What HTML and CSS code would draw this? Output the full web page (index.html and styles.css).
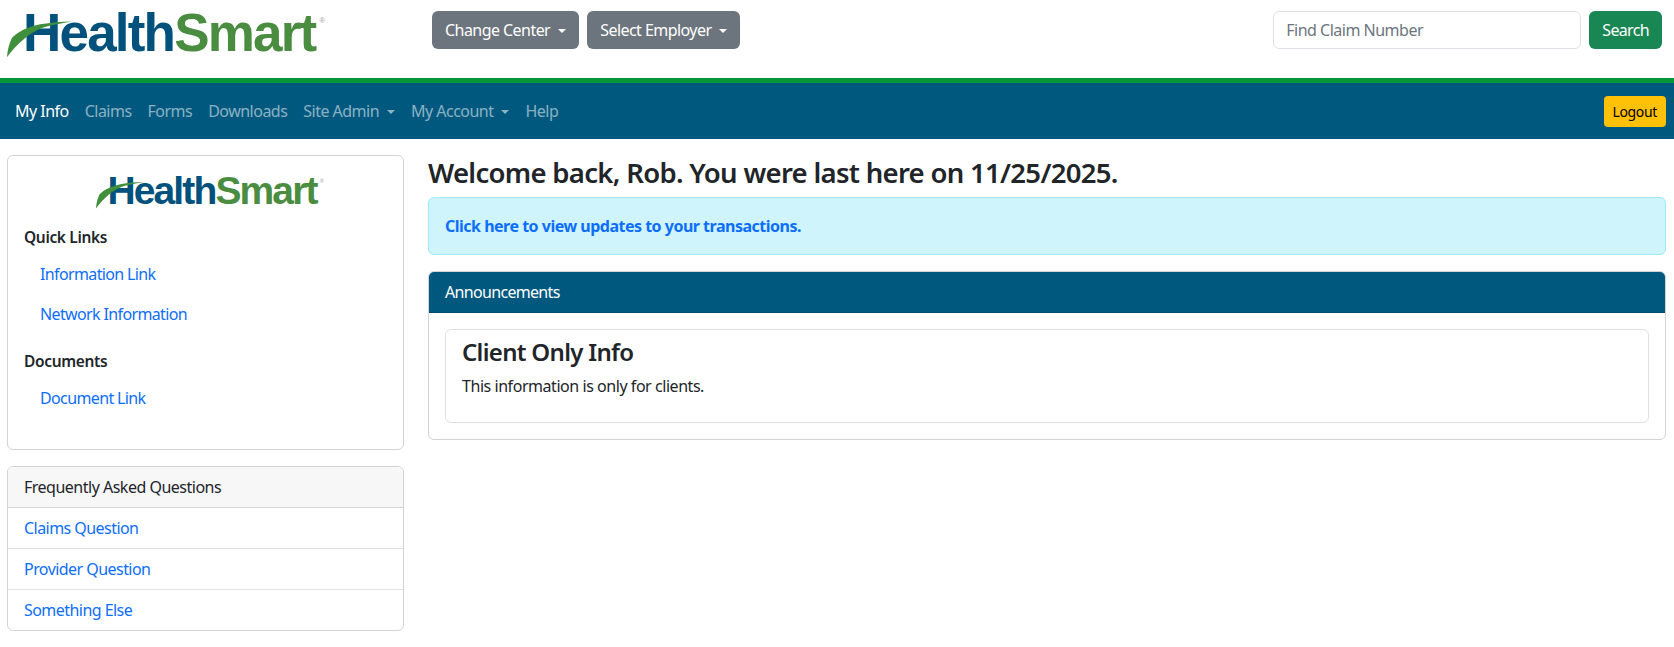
FILE: index.html
```html
<!DOCTYPE html>
<html lang="en">
<head>
    <meta charset="UTF-8">
    <title>HealthSmart</title>
    <link rel="stylesheet" href="styles.css">
</head>
<body>
<header class="top-header">
    <div class="top-logo">
        <div class="logo">
            <svg class="logo-swoosh" viewBox="0 0 70 40" preserveAspectRatio="none"><path d="M0 39 C0.5 31 2.5 24 5 19 C11 12 22 7 34 4.5 C45 2.5 56 1.8 67 1.5 C56 3.5 46 5 38 7.5 C24 12 10 25 0 39 Z"/></svg>
            <span class="logo-blue">Health</span><span class="logo-green">Smart</span><span class="logo-reg">®</span>
        </div>
    </div>
    <div class="top-buttons">
        <button class="btn btn-grey">Change Center<i class="caret"></i></button>
        <button class="btn btn-grey">Select Employer<i class="caret"></i></button>
    </div>
    <form class="top-search">
        <input type="text" class="search-input" placeholder="Find Claim Number">
        <button class="btn btn-green" type="button">Search</button>
    </form>
</header>

<nav class="main-nav">
    <a class="nav-link active" href="#">My Info</a>
    <a class="nav-link" href="#">Claims</a>
    <a class="nav-link" href="#">Forms</a>
    <a class="nav-link" href="#">Downloads</a>
    <a class="nav-link" href="#">Site Admin<i class="caret"></i></a>
    <a class="nav-link" href="#">My Account<i class="caret"></i></a>
    <a class="nav-link" href="#">Help</a>
    <button class="btn btn-logout">Logout</button>
</nav>

<div class="page">
    <aside class="side">
        <div class="card links-card">
            <div class="side-logo">
                <div class="logo logo-small">
                    <svg class="logo-swoosh" viewBox="0 0 70 40" preserveAspectRatio="none"><path d="M0 39 C0.5 31 2.5 24 5 19 C11 12 22 7 34 4.5 C45 2.5 56 1.8 67 1.5 C56 3.5 46 5 38 7.5 C24 12 10 25 0 39 Z"/></svg>
                    <span class="logo-blue">Health</span><span class="logo-green">Smart</span><span class="logo-reg">®</span>
                </div>
            </div>
            <div class="links-title">Quick Links</div>
            <a class="side-link" href="#">Information Link</a>
            <a class="side-link" href="#">Network Information</a>
            <div class="links-title links-title-next">Documents</div>
            <a class="side-link" href="#">Document Link</a>
        </div>

        <div class="card faq-card">
            <div class="faq-header">Frequently Asked Questions</div>
            <a class="faq-item" href="#">Claims Question</a>
            <a class="faq-item" href="#">Provider Question</a>
            <a class="faq-item" href="#">Something Else</a>
        </div>
    </aside>

    <main class="content">
        <h3 class="welcome">Welcome back, Rob. You were last here on 11/25/2025.</h3>
        <div class="alert"><a href="#">Click here to view updates to your transactions.</a></div>

        <div class="card">
            <div class="announce-header">Announcements</div>
            <div class="announce-body">
                <div class="info-card">
                    <h4>Client Only Info</h4>
                    <p>This information is only for clients.</p>
                </div>
            </div>
        </div>
    </main>
</div>
</body>
</html>
```

FILE: styles.css
```css
* {
    box-sizing: border-box;
}
body {
    margin: 0;
    font-family: "Noto Sans", "Open Sans", sans-serif;
    font-size: 16px;
    line-height: 24px;
    color: #212529;
    background-color: #fff;
}
a {
    color: #0d6efd;
    text-decoration: none;
}

/* buttons */
.btn {
    height: 38px;
    padding: 0 12px;
    border: 1px solid transparent;
    border-radius: 6px;
    font-family: inherit;
    font-size: 16px;
    letter-spacing: -0.55px;
    color: #fff;
}
.btn-grey {
    background-color: #6c757d;
}
.btn-green {
    letter-spacing: -0.65px;
    background-color: #198754;
}
.btn-logout {
    height: 31px;
    margin-left: auto;
    padding: 0 8px;
    border-radius: 4px;
    font-size: 14px;
    letter-spacing: -0.35px;
    color: #000;
    background-color: #ffc107;
}
.caret {
    display: inline-block;
    margin-left: 8px;
    vertical-align: 3px;
    border-top: 4.8px solid;
    border-left: 4.8px solid transparent;
    border-right: 4.8px solid transparent;
}

/* logo */
.logo {
    position: relative;
    display: inline-block;
    font-family: "Liberation Sans", Arial, sans-serif;
    font-size: 53px;
    font-weight: 700;
    line-height: 1;
    letter-spacing: -0.034em;
    white-space: nowrap;
}
.logo-small {
    font-size: 39px;
    letter-spacing: -0.048em;
}
.logo-blue {
    color: #00517c;
}
.logo-green {
    color: #4a8c40;
}
.logo-reg {
    position: absolute;
    top: 1.5em;
    right: -1.3em;
    font-size: 0.14em;
    font-weight: 400;
    letter-spacing: 0;
    color: #999;
}
.logo-swoosh {
    position: absolute;
    top: 0.26em;
    left: -0.3em;
    width: 1.29em;
    height: 0.72em;
    overflow: visible;
    fill: #3f8f3c;
}

/* header */
.top-header {
    display: flex;
    align-items: flex-start;
    height: 78px;
    padding: 6px 12px 0 0;
}
.top-logo {
    display: flex;
    width: 432px;
    padding-left: 23px;
}
.top-buttons {
    display: flex;
    gap: 8px;
    margin-top: 5px;
}
.top-search {
    display: flex;
    gap: 8px;
    margin: 5px 0 0 auto;
}
.search-input {
    width: 308px;
    height: 38px;
    padding: 0 12px;
    border: 1px solid #dee2e6;
    border-radius: 6px;
    font-family: inherit;
    font-size: 16px;
    letter-spacing: -0.5px;
}
.search-input::placeholder {
    color: #6c757d;
}

/* nav */
.main-nav {
    display: flex;
    align-items: center;
    height: 61px;
    padding: 0 8px 0 7px;
    border-top: 5px solid #05963a;
    background-color: #00587f;
}
.nav-link {
    padding: 8px;
    letter-spacing: -0.52px;
    color: rgba(255, 255, 255, .55);
}
.nav-link.active {
    color: #fff;
}

/* page */
.page {
    display: grid;
    grid-template-columns: 397px 1fr;
    gap: 24px;
    padding: 16px 8px 0 7px;
}
.card {
    border: 1px solid #d3d3d3;
    border-radius: 6px;
    background-color: #fff;
}
.links-card {
    height: 295px;
    padding: 0 16px;
}
.side-logo {
    display: flex;
    justify-content: center;
    padding: 15px 0 15px 13px;
}
.links-title {
    font-weight: 600;
    font-size: 15.5px;
    letter-spacing: -0.35px;
}
.links-title-next {
    margin-top: 15px;
}
.links-title + .side-link {
    margin-top: 5px;
}
.side-link {
    display: block;
    padding: 8px 16px;
    letter-spacing: -0.63px;
}
.faq-card {
    margin-top: 16px;
    overflow: hidden;
}
.faq-header {
    height: 41px;
    padding: 8px 16px;
    border-bottom: 1px solid #d3d3d3;
    letter-spacing: -0.5px;
    background-color: #f7f7f7;
}
.faq-item {
    display: block;
    padding: 8px 16px;
    border-bottom: 1px solid #dee2e6;
    letter-spacing: -0.55px;
}
.faq-item:last-child {
    border-bottom: 0;
}

.welcome {
    margin: 1px 0 7px;
    font-size: 27.5px;
    line-height: 34px;
    font-weight: 600;
    letter-spacing: -0.7px;
}
.alert {
    padding: 16px;
    margin-bottom: 16px;
    border: 1px solid #9eeaf9;
    border-radius: 6px;
    font-weight: 700;
    letter-spacing: -0.5px;
    background-color: #cff4fc;
}
.announce-header {
    height: 41px;
    padding: 8px 16px;
    border-radius: 5px 5px 0 0;
    border-bottom: 1px solid #004a6b;
    letter-spacing: -0.68px;
    color: #fff;
    background-color: #00587f;
}
.announce-body {
    padding: 16px;
}
.info-card {
    padding: 8px 16px;
    border: 1px solid #dee2e6;
    border-radius: 6px;
}
.info-card h4 {
    margin: 0 0 8px;
    font-size: 24px;
    line-height: 28px;
    font-weight: 600;
    letter-spacing: -0.7px;
}
.info-card p {
    margin: 0 0 16px;
    letter-spacing: -0.45px;
}
```
